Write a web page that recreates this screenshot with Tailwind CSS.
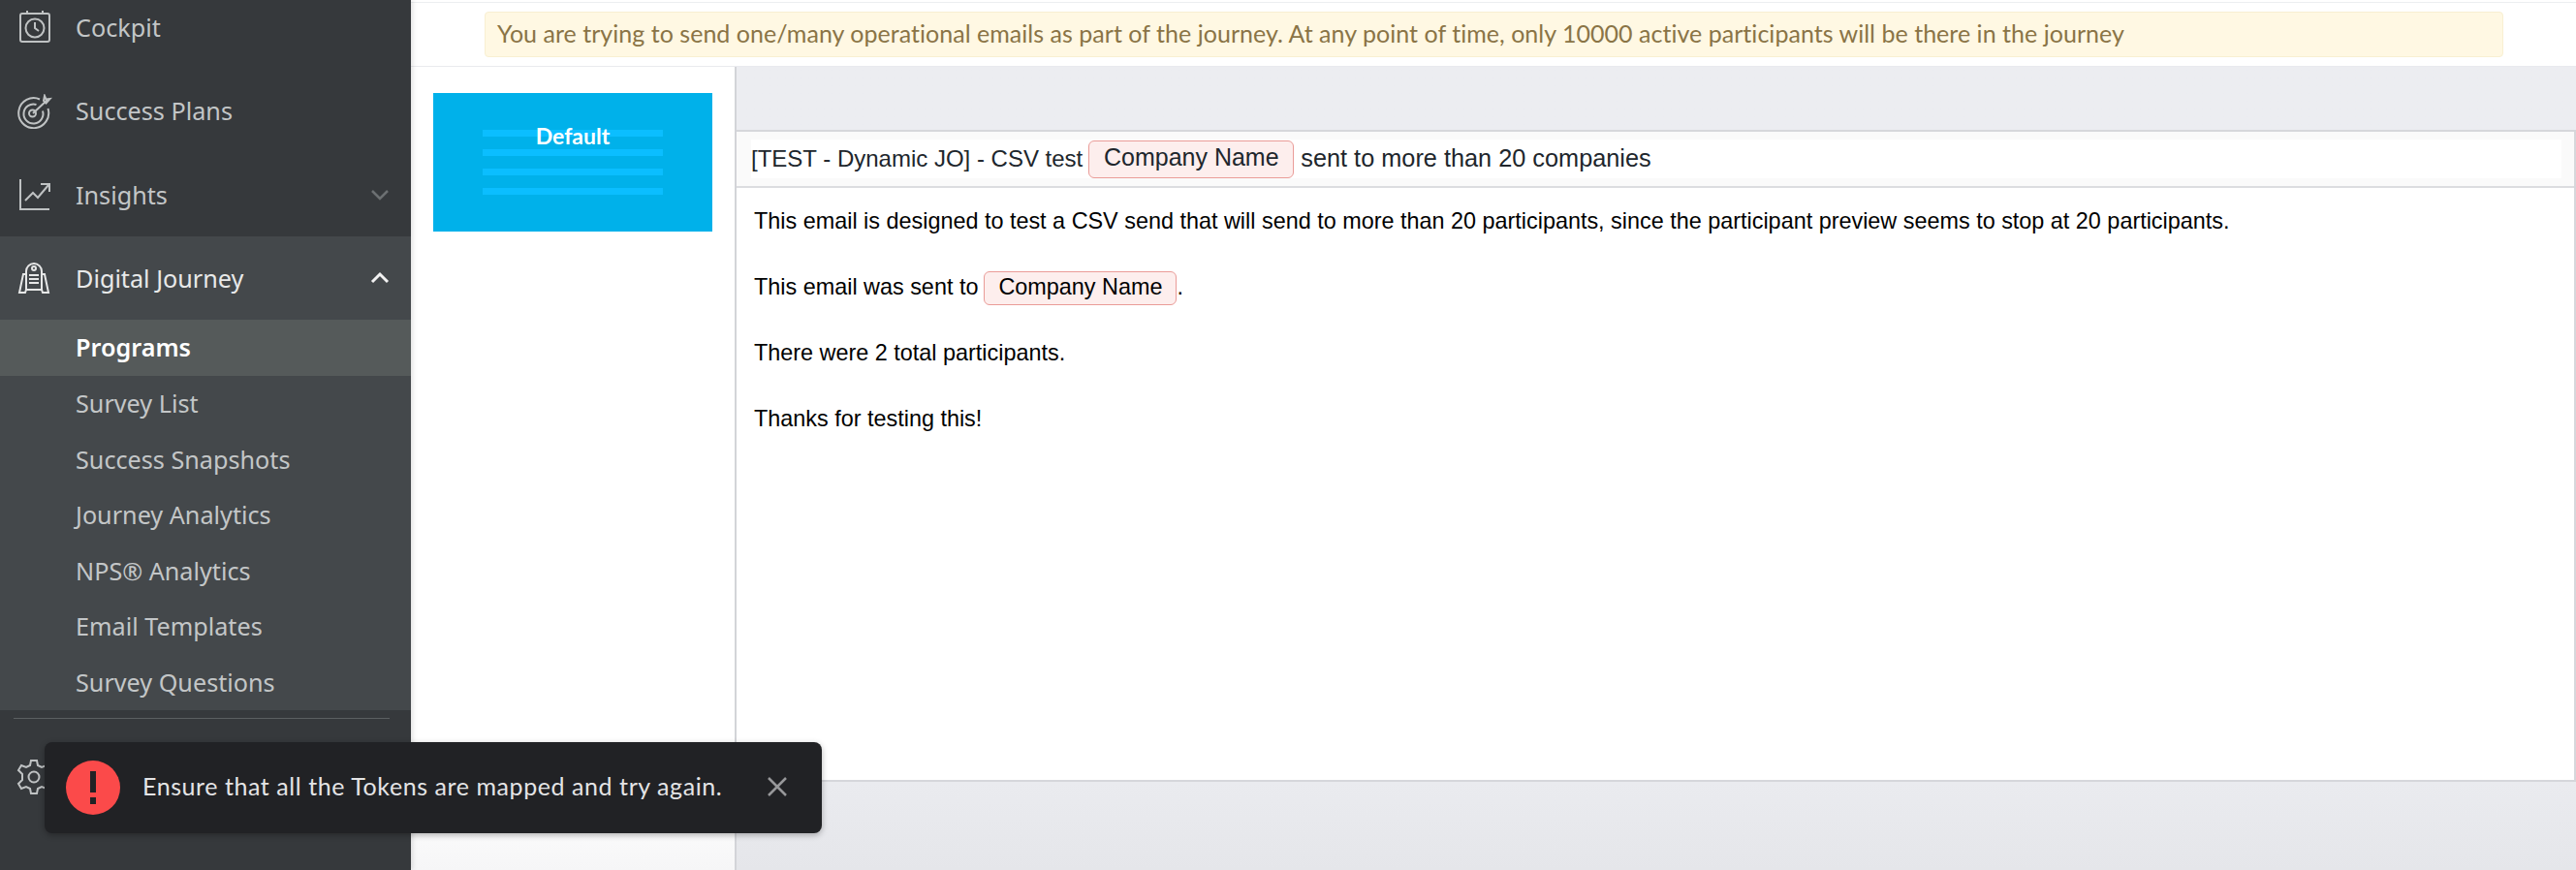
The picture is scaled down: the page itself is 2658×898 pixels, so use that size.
<!DOCTYPE html>
<html>
  <head>
    <title>Digital Journey</title>
    <script src="https://cdn.jsdelivr.net/npm/@tailwindcss/browser@4"></script>
  </head>
  <body class="relative h-[898px] w-[2658px] overflow-hidden bg-white font-['Liberation_Sans',sans-serif]">
    <div class="flex h-full">

      <!-- Sidebar -->
      <aside class="z-10 flex h-full w-[424px] shrink-0 flex-col bg-[#36393c] font-['Noto_Sans',sans-serif] text-[25.2px] text-[#c3c6c7] shadow-[2px_0_5px_rgba(0,0,0,0.12)]">
        <div class="-mt-[15px] flex h-[86px] shrink-0 items-center">
          <svg class="ml-[18px] h-[36px] w-[36px]" viewBox="0 0 36 36" fill="none" stroke="#bfc2c3" stroke-width="2"><rect x="3" y="4" width="30" height="29" rx="2"/><path d="M10 1v4M26 1v4"/><circle cx="18" cy="19" r="9.500"/><path d="M18 13v6l4 3"/></svg>
          <span class="ml-[24px] pt-[2px]">Cockpit</span>
        </div>
        <div class="flex h-[87px] shrink-0 items-center">
          <svg class="ml-[18px] h-[36px] w-[36px]" viewBox="0 0 36 36" fill="none" stroke="#bfc2c3" stroke-width="2"><path d="M23 5.500A15.500 15.500 0 1 0 31.500 15"/><path d="M19.500 11A10 10 0 1 0 26 17.500"/><circle cx="15.500" cy="20" r="3.500"/><path d="M16 20 32 5M27 7l1-5 1.500 3.500 4-.5-4 4.500z"/></svg>
          <span class="ml-[24px]">Success Plans</span>
        </div>
        <div class="flex h-[86px] shrink-0 items-center">
          <svg class="ml-[18px] h-[36px] w-[36px]" viewBox="0 0 36 36" fill="none" stroke="#bfc2c3" stroke-width="2"><path d="M3 2v31h30"/><path d="M8 24l8-8 5 5 11-13"/><path d="M24 7h9v8"/></svg>
          <span class="ml-[24px] pt-[2px]">Insights</span>
          <svg class="ml-auto mr-[22px] h-[14px] w-[20px]" viewBox="0 0 20 14" fill="none" stroke="#6c7072" stroke-width="2.500"><path d="M2 3l8 8 8-8"/></svg>
        </div>
        <div class="flex h-[86px] shrink-0 items-center bg-[#44484b] text-[#e8e9e9]">
          <svg class="ml-[18px] h-[36px] w-[36px]" viewBox="0 0 36 36" fill="none" stroke="#e6e7e7" stroke-width="2"><path d="M9 31V11a8 8 0 0 1 16 0v20"/><circle cx="17" cy="8" r="2"/><path d="M12 15h10M12 19h10M12 23h10M9 30h16"/><path d="M9 14H6L2 33h6l1-3M25 14h3l4 19h-6l-1-3"/></svg>
          <span class="ml-[24px] pt-[2px]">Digital Journey</span>
          <svg class="ml-auto mr-[22px] h-[14px] w-[20px]" viewBox="0 0 20 14" fill="none" stroke="#f2f2f2" stroke-width="3"><path d="M2 11l8-8 8 8"/></svg>
        </div>
        <div class="flex h-[403px] shrink-0 flex-col bg-[#44484b]">
          <div class="flex h-[58px] items-center bg-[#555a5a] pl-[78px] font-semibold text-white">Programs</div>
          <div class="flex h-[58px] items-center pl-[78px]">Survey List</div>
          <div class="flex h-[57px] items-center pl-[78px]">Success Snapshots</div>
          <div class="flex h-[58px] items-center pl-[78px]">Journey Analytics</div>
          <div class="flex h-[57px] items-center pl-[78px]">NPS® Analytics</div>
          <div class="flex h-[58px] items-center pl-[78px]">Email Templates</div>
          <div class="flex h-[57px] items-center pl-[78px]">Survey Questions</div>
        </div>
        <div class="ml-[14px] mt-[8px] h-px w-[388px] bg-[#5b5f61]"></div>
        <div class="flex flex-1 items-start pt-[41px]">
          <svg class="ml-[16px] h-[38px] w-[38px]" viewBox="0 0 38 38" fill="none" stroke="#bfc2c3" stroke-width="2"><circle cx="19" cy="19" r="5.500"/><path d="M16 2h6l1 5 4 2 5-2 3 5-4 4v6l4 4-3 5-5-2-4 2-1 5h-6l-1-5-4-2-5 2-3-5 4-4v-6l-4-4 3-5 5 2 4-2z"/></svg>
        </div>
      </aside>

      <!-- Main -->
      <main class="flex h-full min-w-0 flex-1 flex-col">
        <div class="mt-[2px] h-px shrink-0 bg-[#eceef0]"></div>
        <div class="flex h-[66px] shrink-0 items-start border-b border-[#e9eaee] pl-[76px] pr-[75px] pt-[9px]">
          <div class="flex h-[47px] w-full items-center rounded-[4px] border border-[#f8efd2] bg-[#fff8e3] pb-[2px] pl-[12px] font-['Lato',sans-serif] text-[25px] tracking-[0.03px] text-[#8a7446]">You are trying to send one/many operational emails as part of the journey. At any point of time, only 10000 active participants will be there in the journey</div>
        </div>

        <div class="flex min-h-0 flex-1">
          <!-- Layout thumbnail -->
          <div class="w-[334px] shrink-0 bg-gradient-to-b from-white from-90% to-[#f6f6f7] pl-[23px] pt-[27px]">
            <div class="relative flex h-[143px] w-[288px] flex-col gap-[13px] bg-[#00b1ea] px-[51px] pt-[38px]">
              <div class="h-[7px] bg-[#0bbeff]"></div>
              <div class="h-[7px] bg-[#0bbeff]"></div>
              <div class="h-[7px] bg-[#0bbeff]"></div>
              <div class="h-[7px] bg-[#0bbeff]"></div>
              <span class="absolute inset-x-0 top-[26px] text-center font-['Lato',sans-serif] text-[23px] font-bold leading-[36px] text-white">Default</span>
            </div>
          </div>

          <!-- Email preview -->
          <div class="flex min-w-0 flex-1 flex-col border-l-2 border-[#d3d4d8] bg-gradient-to-b from-[#ecedf1] from-85% to-[#e5e6ea] pt-[65px]">
            <div class="flex h-[673px] shrink-0 flex-col border-y-2 border-r-2 border-[#d6d7db] bg-white">
              <div class="flex h-[58px] shrink-0 items-center border-b-2 border-[#dcdde0] bg-[#fafafa] pl-[15px] pr-[13px]">
                <div class="flex h-[40px] w-full items-center bg-white text-[25.3px] text-[#20262c]">
                  <span class="text-[24px]">[TEST - Dynamic JO] - CSV test</span>
                  <span class="ml-[6px] flex h-[39px] w-[212px] items-center justify-center rounded-[6px] border border-[#ea9c98] bg-[#fdeeed] pb-[2px] text-[25px]">Company Name</span>
                  <span class="ml-[7px]">sent to more than 20 companies</span>
                </div>
              </div>
              <div class="flex flex-col pl-[18px] pt-[15px] text-[23.400px] text-black">
                <p class="flex h-[40px] items-center">This email is designed to test a CSV send that will send to more than 20 participants, since the participant preview seems to stop at 20 participants.</p>
                <p class="mt-[28px] flex h-[40px] items-center">This email was sent to<span class="ml-[6px] flex h-[35px] w-[199px] items-center justify-center rounded-[6px] border border-[#ea9c98] bg-[#fdeeed]">Company Name</span><span>.</span></p>
                <p class="mt-[28px] flex h-[40px] items-center">There were 2 total participants.</p>
                <p class="mt-[28px] flex h-[40px] items-center">Thanks for testing this!</p>
              </div>
            </div>
          </div>
        </div>
      </main>
    </div>

    <!-- Toast -->
    <div class="absolute left-[46px] top-[766px] z-20 flex h-[94px] w-[802px] items-center rounded-[8px] bg-[#212225] shadow-[0_2px_6px_rgba(0,0,0,0.3)]">
      <span class="ml-[22px] flex h-[56px] w-[56px] shrink-0 items-center justify-center rounded-full bg-[#fb4a4a]">
        <svg class="h-[34px] w-[8px]" viewBox="0 0 8 34" fill="#212225"><rect x="1" y="0" width="6" height="22"/><rect x="1" y="27" width="6" height="7"/></svg>
      </span>
      <span class="ml-[23px] pb-[2px] font-['Lato',sans-serif] text-[25px] tracking-[0.57px] text-[#e4e4e5]">Ensure that all the Tokens are mapped and try again.</span>
      <svg class="absolute left-[746px] top-[36px] h-[20px] w-[20px]" viewBox="0 0 20 20" fill="none" stroke="#97989a" stroke-width="2.500"><path d="M1 1l18 18M19 1 1 19"/></svg>
    </div>
  </body>
</html>
